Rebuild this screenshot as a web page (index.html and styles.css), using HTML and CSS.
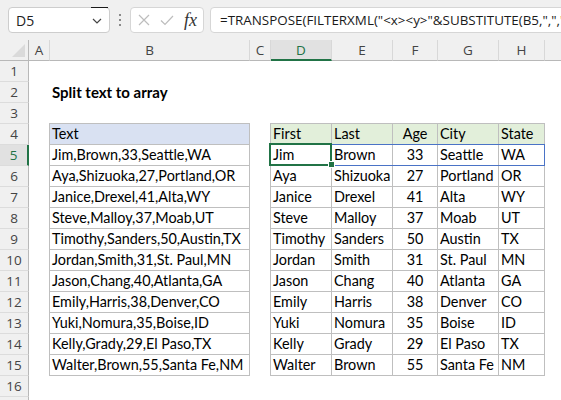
FILE: index.html
```html
<!DOCTYPE html>
<html>
<head>
<meta charset="utf-8">
<link rel="stylesheet" href="styles.css">
</head>
<body>
<div class="app">
  <div class="toolbar">
    <div class="namebox">
      <span class="name">D5</span>
      <svg class="chev" width="10" height="6" viewBox="0 0 10 6"><path d="M1 1 L5 5 L9 1" fill="none" stroke="#444" stroke-width="1.2"/></svg>
      <i class="namebox-mark"></i>
    </div>
    <div class="grip"><i></i><i></i><i></i></div>
    <div class="fxbox">
      <svg width="12" height="12" viewBox="0 0 12 12"><path d="M1 1 L11 11 M11 1 L1 11" stroke="#bdbdbd" stroke-width="1.2" fill="none"/></svg>
      <svg width="14" height="11" viewBox="0 0 14 11"><path d="M1 5.5 L5 9.5 L13 1" stroke="#bdbdbd" stroke-width="1.2" fill="none"/></svg>
      <span class="fx">fx</span>
    </div>
    <div class="formula">=TRANSPOSE(FILTERXML("&lt;x&gt;&lt;y&gt;"&amp;SUBSTITUTE(B5,",","&lt;/y&gt;&lt;y&gt;")&amp;"&lt;/y&gt;&lt;/x&gt;","//y"))</div>
  </div>

  <div class="sheet">
    <div class="corner"></div>
    <div class="ch">A</div>
    <div class="ch">B</div>
    <div class="ch">C</div>
    <div class="ch ch-active">D</div>
    <div class="ch">E</div>
    <div class="ch">F</div>
    <div class="ch">G</div>
    <div class="ch">H</div>
    <div class="ch ch-last"></div>

    <div class="rh r1">1</div>
    <div class="rh r2">2</div>
    <div class="rh r3">3</div>
    <div class="rh r4">4</div>
    <div class="rh r5 rh-active">5</div>
    <div class="rh r6">6</div>
    <div class="rh r7">7</div>
    <div class="rh r8">8</div>
    <div class="rh r9">9</div>
    <div class="rh r10">10</div>
    <div class="rh r11">11</div>
    <div class="rh r12">12</div>
    <div class="rh r13">13</div>
    <div class="rh r14">14</div>
    <div class="rh r15">15</div>
    <div class="rh r16">16</div>
    <div class="rh r17"></div>

    <div class="title">Split text to array</div>

    <div class="tbl tbl-text">
      <div class="c hd-blue">Text</div>
      <div class="c">Jim,Brown,33,Seattle,WA</div>
      <div class="c">Aya,Shizuoka,27,Portland,OR</div>
      <div class="c">Janice,Drexel,41,Alta,WY</div>
      <div class="c">Steve,Malloy,37,Moab,UT</div>
      <div class="c">Timothy,Sanders,50,Austin,TX</div>
      <div class="c">Jordan,Smith,31,St. Paul,MN</div>
      <div class="c">Jason,Chang,40,Atlanta,GA</div>
      <div class="c">Emily,Harris,38,Denver,CO</div>
      <div class="c">Yuki,Nomura,35,Boise,ID</div>
      <div class="c">Kelly,Grady,29,El Paso,TX</div>
      <div class="c">Walter,Brown,55,Santa Fe,NM</div>
    </div>

    <div class="tbl tbl-out">
      <div class="tr hd-green"><div class="c">First</div><div class="c">Last</div><div class="c num">Age</div><div class="c">City</div><div class="c">State</div></div>
      <div class="tr spill"><div class="c active">Jim</div><div class="c">Brown</div><div class="c num">33</div><div class="c">Seattle</div><div class="c">WA</div></div>
      <div class="tr"><div class="c">Aya</div><div class="c">Shizuoka</div><div class="c num">27</div><div class="c">Portland</div><div class="c">OR</div></div>
      <div class="tr"><div class="c">Janice</div><div class="c">Drexel</div><div class="c num">41</div><div class="c">Alta</div><div class="c">WY</div></div>
      <div class="tr"><div class="c">Steve</div><div class="c">Malloy</div><div class="c num">37</div><div class="c">Moab</div><div class="c">UT</div></div>
      <div class="tr"><div class="c">Timothy</div><div class="c">Sanders</div><div class="c num">50</div><div class="c">Austin</div><div class="c">TX</div></div>
      <div class="tr"><div class="c">Jordan</div><div class="c">Smith</div><div class="c num">31</div><div class="c">St. Paul</div><div class="c">MN</div></div>
      <div class="tr"><div class="c">Jason</div><div class="c">Chang</div><div class="c num">40</div><div class="c">Atlanta</div><div class="c">GA</div></div>
      <div class="tr"><div class="c">Emily</div><div class="c">Harris</div><div class="c num">38</div><div class="c">Denver</div><div class="c">CO</div></div>
      <div class="tr"><div class="c">Yuki</div><div class="c">Nomura</div><div class="c num">35</div><div class="c">Boise</div><div class="c">ID</div></div>
      <div class="tr"><div class="c">Kelly</div><div class="c">Grady</div><div class="c num">29</div><div class="c">El Paso</div><div class="c">TX</div></div>
      <div class="tr"><div class="c">Walter</div><div class="c">Brown</div><div class="c num">55</div><div class="c">Santa Fe</div><div class="c">NM</div></div>
    </div>
  </div>
</div>
</body>
</html>
```

FILE: styles.css
```css
* { box-sizing: border-box; }

body {
  margin: 0;
  width: 561px;
  height: 400px;
  overflow: hidden;
  background: #fff;
}

.app {
  width: 561px;
  height: 400px;
  overflow: hidden;
  font-family: "Lato", "Liberation Sans", sans-serif;
}

/* ---------- formula bar ---------- */
.toolbar {
  height: 40px;
  background: #f0f0f0;
  display: flex;
  align-items: flex-start;
  padding: 7px 0 0 8px;
  overflow: hidden;
  font-family: "Open Sans", "Noto Sans", sans-serif;
}

.namebox {
  position: relative;
  width: 102px;
  height: 26px;
  flex: none;
  background: #fff;
  border: 1px solid #cdcdcd;
  border-radius: 4px;
  display: flex;
  align-items: center;
  justify-content: space-between;
  padding: 0 7px 0 7px;
}

.name {
  font-size: 14px;
  color: #222;
}

.chev { margin-top: 1px; }

.namebox-mark {
  position: absolute;
  top: -1px;
  left: 82px;
  width: 17px;
  height: 1px;
  background: #1a1a1a;
}

.grip {
  width: 20px;
  height: 26px;
  flex: none;
  display: flex;
  flex-direction: column;
  align-items: center;
  justify-content: center;
  gap: 3px;
}

.grip i {
  display: block;
  width: 2px;
  height: 2px;
  background: #8a8a8a;
}

.fxbox {
  width: 74px;
  height: 26px;
  flex: none;
  background: #fff;
  border: 1px solid #d6d6d6;
  border-radius: 4px;
  display: flex;
  align-items: center;
  padding: 0 0 0 7px;
  gap: 10px;
}

.fx {
  font-family: "Liberation Serif", "DejaVu Serif", serif;
  font-style: italic;
  font-size: 18px;
  color: #333;
  margin-left: 0;
  line-height: 1;
}

.formula {
  flex: none;
  width: 400px;
  height: 26px;
  margin-left: 6px;
  background: #fff;
  border: 1px solid #d6d6d6;
  border-radius: 4px;
  padding: 0 0 0 9px;
  font-size: 13.4px;
  line-height: 24px;
  color: #1a1a1a;
  white-space: nowrap;
  overflow: hidden;
}

/* ---------- sheet grid ---------- */
.sheet {
  display: grid;
  grid-template-columns: 29px 21px 200px 21px 61px 61px 45px 61px 46px 1fr;
  grid-template-rows: repeat(18, 21px);
  font-size: 14.4px;
  color: #000;
}

.corner {
  position: relative;
  background: #f0f0f0;
  border-right: 1px solid #b8b8b8;
  border-bottom: 1px solid #b8b8b8;
}

.corner::after {
  content: "";
  position: absolute;
  right: 3px;
  bottom: 3px;
  width: 13px;
  height: 13px;
  background: #dadada;
  clip-path: polygon(100% 0, 100% 100%, 0 100%);
}

.ch {
  background: #f0f0f0;
  border-right: 1px solid #d8d8d8;
  border-bottom: 1px solid #b8b8b8;
  text-align: center;
  font-family: "Open Sans", "Noto Sans", sans-serif;
  font-size: 13.5px;
  line-height: 20px;
  color: #444;
}

.ch-active {
  background: #e1e1e1;
  color: #217346;
  border-bottom: 2px solid #217346;
}

.ch-last { border-right: none; }

.rh {
  grid-column: 1;
  background: #f0f0f0;
  border-right: 1px solid #b8b8b8;
  border-bottom: 1px solid #dcdcdc;
  text-align: center;
  font-family: "Open Sans", "Noto Sans", sans-serif;
  font-size: 13.5px;
  line-height: 21px;
  color: #444;
}

.r1 { grid-row: 2; }
.r2 { grid-row: 3; }
.r3 { grid-row: 4; }
.r4 { grid-row: 5; }
.r5 { grid-row: 6; }
.r6 { grid-row: 7; }
.r7 { grid-row: 8; }
.r8 { grid-row: 9; }
.r9 { grid-row: 10; }
.r10 { grid-row: 11; }
.r11 { grid-row: 12; }
.r12 { grid-row: 13; }
.r13 { grid-row: 14; }
.r14 { grid-row: 15; }
.r15 { grid-row: 16; }
.r16 { grid-row: 17; }
.r17 { grid-row: 18; }

.rh-active {
  background: #e1e1e1;
  color: #217346;
  border-right: 2px solid #217346;
}

.title {
  grid-column: 3 / span 3;
  grid-row: 3;
  padding-left: 2px;
  font-weight: bold;
  font-size: 15px;
  line-height: 20px;
  white-space: nowrap;
}

/* ---------- tables ---------- */
.tbl {
  margin: -1px 0 0 -1px;
  border-left: 1px solid #bfbfbf;
  border-top: 1px solid #bfbfbf;
  display: flex;
  flex-direction: column;
}

.tbl-text {
  grid-column: 3;
  grid-row: 5 / span 12;
}

.tbl-out {
  grid-column: 5 / span 5;
  grid-row: 5 / span 12;
}

.c {
  height: 21px;
  flex: none;
  border-right: 1px solid #bfbfbf;
  border-bottom: 1px solid #bfbfbf;
  padding: 0 2px 0 2px;
  line-height: 20px;
  white-space: nowrap;
  overflow: hidden;
}

.tr {
  position: relative;
  display: grid;
  grid-template-columns: 61px 61px 45px 61px 46px;
}

.num { text-align: center; }

.hd-blue { background: #d9e1f2; }
.hd-green .c { background: #e2efda; }

.spill::after {
  content: "";
  position: absolute;
  top: -1px;
  left: -1px;
  right: 0;
  bottom: 0;
  border: 1px solid #4a73c6;
  z-index: 1;
  pointer-events: none;
}

.active {
  position: relative;
  overflow: visible;
}

.active::before {
  content: "";
  position: absolute;
  top: -2px;
  left: -2px;
  right: -1px;
  bottom: -1px;
  border: 2px solid #217346;
  z-index: 2;
}

.active::after {
  content: "";
  position: absolute;
  right: -3px;
  bottom: -2px;
  width: 5px;
  height: 5px;
  background: #217346;
  box-shadow: 0 0 0 1px #fff;
  z-index: 3;
}
```
